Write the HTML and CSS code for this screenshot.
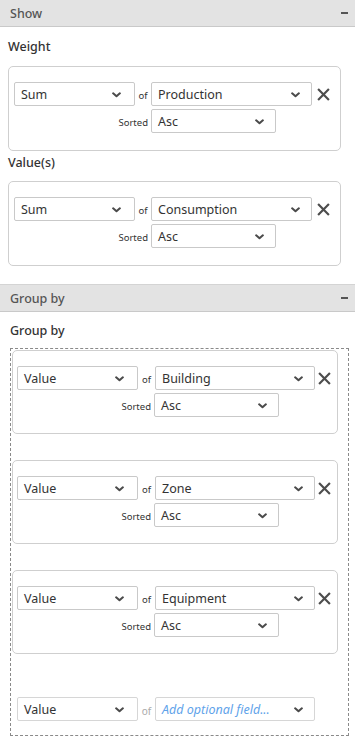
FILE: index.html
```html
<!DOCTYPE html>
<html>
<head>
<meta charset="utf-8">
<link rel="stylesheet" href="styles.css">
</head>
<body>
<div class="panel">
  <div class="header"><span>Show</span><span class="minus"></span></div>
  <div class="section">
    <div class="label first">Weight</div>
    <div class="card">
      <div class="row">
        <div class="select s1"><span>Sum</span><svg class="chev" viewBox="0 0 8 5"><path d="M1 1l3 2.6L7 1"/></svg></div>
        <span class="of">of</span>
        <div class="select s2"><span>Production</span><svg class="chev" viewBox="0 0 8 5"><path d="M1 1l3 2.6L7 1"/></svg></div>
        <svg class="close" viewBox="0 0 12 12"><path d="M1 1l10 10M11 1L1 11"/></svg>
      </div>
      <div class="row sort">
        <span class="sorted">Sorted</span>
        <div class="select s3"><span>Asc</span><svg class="chev" viewBox="0 0 8 5"><path d="M1 1l3 2.6L7 1"/></svg></div>
      </div>
    </div>
    <div class="label">Value(s)</div>
    <div class="card">
      <div class="row">
        <div class="select s1"><span>Sum</span><svg class="chev" viewBox="0 0 8 5"><path d="M1 1l3 2.6L7 1"/></svg></div>
        <span class="of">of</span>
        <div class="select s2"><span>Consumption</span><svg class="chev" viewBox="0 0 8 5"><path d="M1 1l3 2.6L7 1"/></svg></div>
        <svg class="close" viewBox="0 0 12 12"><path d="M1 1l10 10M11 1L1 11"/></svg>
      </div>
      <div class="row sort">
        <span class="sorted">Sorted</span>
        <div class="select s3"><span>Asc</span><svg class="chev" viewBox="0 0 8 5"><path d="M1 1l3 2.6L7 1"/></svg></div>
      </div>
    </div>
  </div>

  <div class="header group-header"><span>Group by</span><span class="minus"></span></div>
  <div class="label group-label">Group by</div>
  <div class="dropzone">
    <div class="card gcard">
      <div class="row">
        <div class="select s1"><span>Value</span><svg class="chev" viewBox="0 0 8 5"><path d="M1 1l3 2.6L7 1"/></svg></div>
        <span class="of">of</span>
        <div class="select s2"><span>Building</span><svg class="chev" viewBox="0 0 8 5"><path d="M1 1l3 2.6L7 1"/></svg></div>
        <svg class="close" viewBox="0 0 12 12"><path d="M1 1l10 10M11 1L1 11"/></svg>
      </div>
      <div class="row sort">
        <span class="sorted">Sorted</span>
        <div class="select s3"><span>Asc</span><svg class="chev" viewBox="0 0 8 5"><path d="M1 1l3 2.6L7 1"/></svg></div>
      </div>
    </div>
    <div class="card gcard">
      <div class="row">
        <div class="select s1"><span>Value</span><svg class="chev" viewBox="0 0 8 5"><path d="M1 1l3 2.6L7 1"/></svg></div>
        <span class="of">of</span>
        <div class="select s2"><span>Zone</span><svg class="chev" viewBox="0 0 8 5"><path d="M1 1l3 2.6L7 1"/></svg></div>
        <svg class="close" viewBox="0 0 12 12"><path d="M1 1l10 10M11 1L1 11"/></svg>
      </div>
      <div class="row sort">
        <span class="sorted">Sorted</span>
        <div class="select s3"><span>Asc</span><svg class="chev" viewBox="0 0 8 5"><path d="M1 1l3 2.6L7 1"/></svg></div>
      </div>
    </div>
    <div class="card gcard">
      <div class="row">
        <div class="select s1"><span>Value</span><svg class="chev" viewBox="0 0 8 5"><path d="M1 1l3 2.6L7 1"/></svg></div>
        <span class="of">of</span>
        <div class="select s2"><span>Equipment</span><svg class="chev" viewBox="0 0 8 5"><path d="M1 1l3 2.6L7 1"/></svg></div>
        <svg class="close" viewBox="0 0 12 12"><path d="M1 1l10 10M11 1L1 11"/></svg>
      </div>
      <div class="row sort">
        <span class="sorted">Sorted</span>
        <div class="select s3"><span>Asc</span><svg class="chev" viewBox="0 0 8 5"><path d="M1 1l3 2.6L7 1"/></svg></div>
      </div>
    </div>
    <div class="card gcard empty">
      <div class="row">
        <div class="select s1 light"><span>Value</span><svg class="chev" viewBox="0 0 8 5"><path d="M1 1l3 2.6L7 1"/></svg></div>
        <span class="of muted">of</span>
        <div class="select s2 light"><span class="placeholder">Add optional field...</span><svg class="chev" viewBox="0 0 8 5"><path d="M1 1l3 2.6L7 1"/></svg></div>
      </div>
    </div>
  </div>
</div>
</body>
</html>
```

FILE: styles.css
```css
* { box-sizing: border-box; }
html, body { margin: 0; padding: 0; background: #fff; }
body {
  font-family: "Noto Sans", "Open Sans", sans-serif;
  font-size: 12.5px;
  color: #333;
  width: 355px;
}
.header {
  height: 27px;
  background: #e3e3e3;
  border-bottom: 1px solid #c9c9c9;
  display: flex;
  align-items: center;
  justify-content: space-between;
  padding: 0 7px 0 10px;
  color: #555;
  font-weight: 500;
  font-size: 12.5px;
}
.group-header {
  margin-top: 18px;
  height: 28px;
  border-top: 1px solid #d4d4d4;
}
.minus {
  width: 7px;
  height: 2px;
  background: #555;
}
.section {
  padding: 0 14px 0 8px;
}
.label {
  font-weight: 500;
  font-size: 12.5px;
  line-height: 16px;
  color: #333;
  margin: 4px 0 10px 0;
}
.label.first { margin: 12px 0 11px 0; }
.group-label { margin: 11px 0 9px 10px; }
.card {
  border: 1px solid #cfcfcf;
  border-radius: 5px;
  padding: 15px 5px 17px 5px;
  display: flex;
  flex-direction: column;
  gap: 3px;
}
.row {
  display: flex;
  align-items: center;
}
.select {
  height: 24px;
  border: 1px solid #c9c9c9;
  border-radius: 2px;
  background: #fff;
  display: flex;
  align-items: center;
  justify-content: space-between;
  padding: 0 11px 0 6px;
  color: #333;
  font-size: 12.5px;
  white-space: nowrap;
}
.select.light { border-color: #d6d6d6; }
.s1 { width: 121px; padding-right: 13px; }
.s2 { width: 161px; }
.s3 { width: 125px; }
.chev {
  width: 9px;
  height: 6px;
  margin-top: 2px;
  fill: none;
  stroke: #4a4a4a;
  stroke-width: 1.8;
  stroke-linecap: round;
  stroke-linejoin: round;
}
.of {
  width: 16px;
  text-align: center;
  font-size: 9.5px;
  color: #333;
  padding-top: 3px;
}
.of.muted { color: #aaa; font-size: 10px; }
.placeholder {
  font-style: italic;
  color: #5fa3ea;
  font-size: 12.5px;
}
.close {
  width: 13px;
  height: 13px;
  margin-left: 5px;
  fill: none;
  stroke: #4d4d4d;
  stroke-width: 2;
}
.sorted {
  width: 137px;
  text-align: right;
  padding-right: 3px;
  font-size: 9.5px;
  color: #333;
  padding-top: 3px;
}
.dropzone {
  margin: 0 6px 0 10px;
  border: 1px dashed #8a8a8a;
  padding: 1px 10px 13px 1px;
  display: flex;
  flex-direction: column;
  gap: 26px;
}
.gcard {
  padding: 15px 5px 16px 4px;
}
.gcard .of { width: 17px; }
.gcard .s2 { width: 160px; }
.gcard .close { margin-left: 3px; }
.empty {
  border-color: transparent;
  padding-top: 16px;
  padding-bottom: 0;
}
```
